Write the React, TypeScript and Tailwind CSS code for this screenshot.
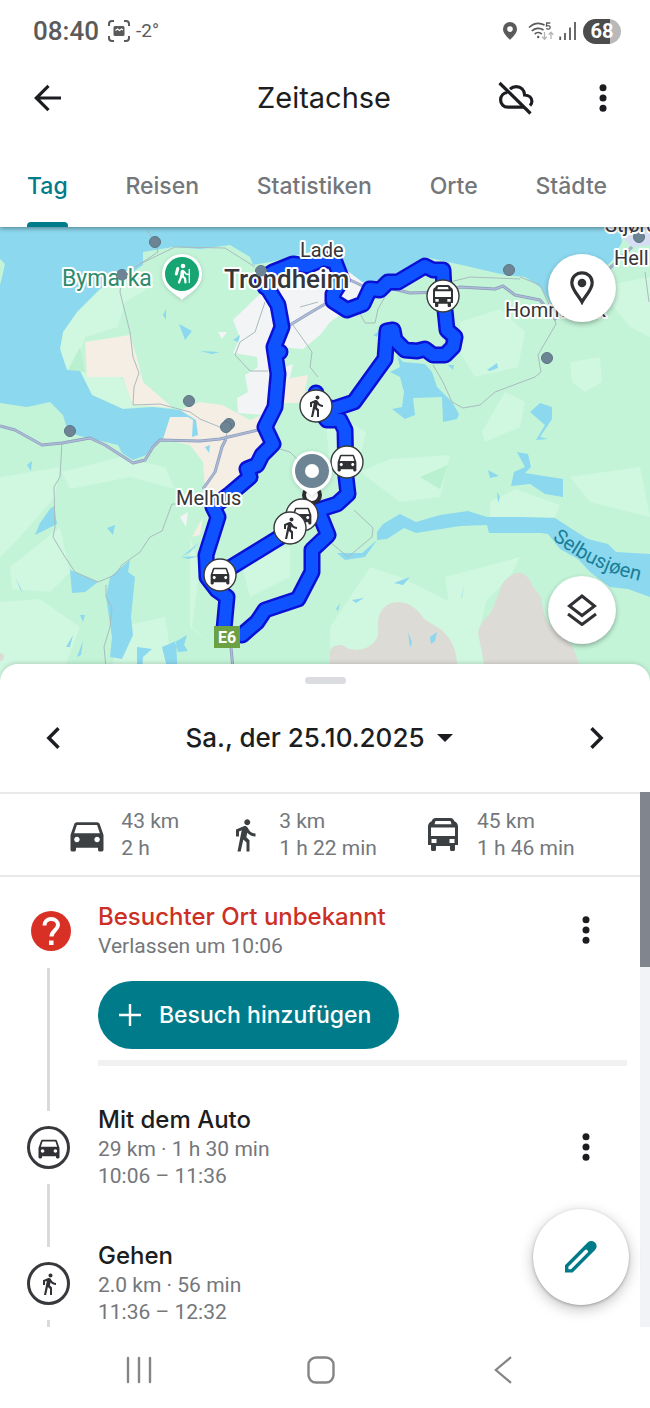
import React from "react";
import { MdDirectionsCar, MdDirectionsWalk } from "react-icons/md";

type IconProps = { className?: string };

const BusIcon = ({ className }: IconProps) => (
  <svg viewBox="0 0 30 33" className={className} fill="currentColor" aria-hidden="true">
    <path
      fillRule="evenodd"
      d="M8 0h14c3 0 3.600 1.500 4.400 3.200C28.500 4 30 6 30 8.500V27h-3v4.500a1.500 1.500 0 0 1-1.500 1.500h-2a1.500 1.500 0 0 1-1.500-1.500V28H8v3.500A1.500 1.500 0 0 1 6.500 33h-2A1.500 1.500 0 0 1 3 31.500V27H0V8.500C0 6 1.500 4 3.600 3.200 4.400 1.500 5 0 8 0Zm-.5 3-1 3.200h17l-1-3.200ZM3 9.500v8.500h24V9.500ZM3.500 21v4h5v-4Zm18 0v4h5v-4Z"
    />
  </svg>
);

const CloudOffIcon = () => (
  <svg viewBox="0 0 36 34" className="h-[34px] w-9" fill="none" stroke="currentColor" strokeWidth="3.2" aria-hidden="true">
    <path d="M1.500 2 32.500 32.500" />
    <path d="M9.500 11.500C5.500 11.800 2.600 15 2.600 19c0 4 3 7.200 7.200 7.200H26" />
    <path d="M12 8.200C13.800 6.500 16 5.700 18.300 5.700c4.600 0 8 3.300 8.300 8.300 4.500.2 7.300 2.700 7.300 6.300 0 1.800-.7 3.200-1.900 4.300" />
  </svg>
);

const MoreIcon = () => (
  <svg viewBox="0 0 24 28" className="h-7 w-6" fill="currentColor" aria-hidden="true">
    <circle cx="12" cy="3.700" r="3.500" />
    <circle cx="12" cy="14" r="3.500" />
    <circle cx="12" cy="24.300" r="3.500" />
  </svg>
);

const StatusBar = () => (
  <div className="flex h-[62px] items-center justify-between pl-[33px] pr-[29px] text-[#5a5a5a]">
    <div className="flex items-center">
      <span className="text-[26px] font-medium leading-8">08:40</span>
      <svg viewBox="0 0 22 22" className="ml-[9px] size-[22px]" fill="none" stroke="currentColor" strokeWidth="2" aria-hidden="true">
        <path d="M1 6V4a3 3 0 0 1 3-3h2M16 1h2a3 3 0 0 1 3 3v2M21 16v2a3 3 0 0 1-3 3h-2M6 21H4a3 3 0 0 1-3-3v-2" />
        <rect x="5.500" y="6" width="11" height="10" rx="1.500" fill="currentColor" stroke="none" />
        <path d="m7.500 10.500 2-1.500 2 1.500 2-1.500 1.500 1" stroke="#fff" strokeWidth="1.200" />
      </svg>
      <span className="ml-[6px] text-[19px] leading-8">-2°</span>
    </div>
    <div className="flex items-center">
      <svg viewBox="0 0 14 18" className="h-[18px] w-[14px]" aria-hidden="true">
        <path fill="currentColor" fillRule="evenodd" d="M7 0a7 7 0 0 1 7 7c0 4.500-4.500 8-7 11-2.500-3-7-6.500-7-11a7 7 0 0 1 7-7Zm0 4.300a2.800 2.800 0 1 0 0 5.600 2.800 2.800 0 0 0 0-5.600Z" />
      </svg>
      <svg viewBox="0 0 26 20" className="ml-[11px] h-5 w-[26px]" fill="none" stroke="currentColor" strokeWidth="1.700" aria-hidden="true">
        <path d="M1 6.500C5.500 2.300 11.500 1.500 16.500 4M3.800 10C7 7 12 6.500 15.500 9M6.700 13c2-1.800 5-1.800 7 0" />
        <circle cx="10.200" cy="16" r="1.200" fill="currentColor" stroke="none" />
        <path d="M22.300 2H18.700l-.3 3c3-.8 4 .3 3.700 1.800-.3 1.500-2.600 1.700-3.900.7" strokeWidth="1.300" />
        <path d="M16.500 11v7m-2.300-2.300 2.300 2.500 2.300-2.500M23 18v-6.500m-2.300 2.300L23 11.300l2.300 2.500" stroke="#b5b5b5" strokeWidth="1.300" />
      </svg>
      <svg viewBox="0 0 18 18" className="ml-[5px] size-[18px]" stroke="currentColor" strokeWidth="1.800" aria-hidden="true">
        <path d="M1.200 14.500V18M6 11v7M11 5.500V18M16 0v18" />
      </svg>
      <span className="ml-[6px] flex h-[25px] w-[38px] items-center justify-center rounded-full bg-linear-to-r from-[#4c4c4c] from-70% to-[#b9b9b9] to-70% text-[20px] font-bold text-white">
        68
      </span>
    </div>
  </div>
);

const TABS = ["Tag", "Reisen", "Statistiken", "Orte", "Städte"];

const Header = () => (
  <header className="relative z-10 bg-white shadow-[0_1px_5px_rgba(0,0,0,0.45)]">
    <StatusBar />
    <div className="grid h-[72px] grid-cols-[1fr_auto_1fr] items-center pl-[33px] pr-[35px]">
      <button type="button" aria-label="Zurück" className="justify-self-start">
        <svg viewBox="0 0 28 28" className="size-7" fill="none" stroke="currentColor" strokeWidth="3.200" aria-hidden="true">
          <path d="M28 14H4M15.500 1.800 3.300 14l12.200 12.200" />
        </svg>
      </button>
      <h1 className="font-[Inter,sans-serif] text-[29px] leading-9">Zeitachse</h1>
      <div className="flex items-center gap-[57px] justify-self-end">
        <button type="button" aria-label="Sicherung aus"><CloudOffIcon /></button>
        <button type="button" aria-label="Weitere Optionen"><MoreIcon /></button>
      </div>
    </div>
    <nav className="flex h-[93px] justify-between pl-[27px] pr-[43px] font-[Inter,sans-serif] text-[23px] font-medium text-[#73777b]">
      {TABS.map((tab, i) => (
        <a
          key={tab}
          href="#"
          className={
            i === 0
              ? "flex flex-col justify-between pt-9 leading-8 text-[#007b8a]"
              : "pt-9 leading-8"
          }
        >
          {tab}
          {i === 0 && <span className="h-[5px] rounded-t-[4px] bg-[#007b8a]" />}
        </a>
      ))}
    </nav>
  </header>
);

const ROUTES = [
  "M265 60 262 52 273 45 293 37 307 39 323 32 335 35 342 53 333 67 333 74 347 83 363 77 370 62 380 63 388 55 398 55 425 39 433 43 443 43 445 83 447 103 455 110 453 120 445 128 433 128 425 122 417 124 405 123 395 113 393 103 387 104 385 132 354 175 333 182 316 176",
  "M262 52 278 78 282 100 274 120 278 147 275 180 265 200 273 217 262 228 257 238 247 242 250 250 230 267 213 280 218 290 206 328 207 350 217 363 227 370 224 402",
  "M280 125 276 125M316 166 317 180 327 193 340 193 345 203 346 250 348 267 337 277 318 283 328 308 312 323 312 345 298 372 265 383 257 395 242 408",
  "M220 347 290 304 318 284",
];

const ROADS =
  "M0 199 15 203 42 218 62 216 90 211 105 218 133 236 145 233 153 220 160 213 200 214 220 212 258 203M226 212 222 220 215 245 203 262M230 410 234 453M290 98 308 87 325 77M350 53 365 60 385 60 410 66 440 65 460 60 495 62 503 59 515 68 540 73 555 92 590 60 632 20";

const DOTS = [
  [155, 15], [122, 48], [261, 44], [189, 174], [229, 197], [226, 200],
  [70, 204], [509, 43], [547, 131], [639, 10],
];

const LABEL = "fill-[#34363a] stroke-white [paint-order:stroke] [stroke-linejoin:round] [stroke-width:4px]";

type Mode = "car" | "walk" | "bus";

const MapMarker = ({ x, y, mode }: { x: number; y: number; mode: Mode }) => (
  <g transform={`translate(${x} ${y})`} color="#303134">
    <circle r="16" fill="#fff" stroke="#37393c" strokeWidth="1.400" />
    {mode === "car" && <MdDirectionsCar x={-12.5} y={-12.5} size={25} />}
    {mode === "walk" && <MdDirectionsWalk x={-12} y={-12} size={24} />}
    {mode === "bus" && (
      <svg x="-10" y="-11" width="20" height="22" viewBox="0 0 30 33">
        <BusIcon />
      </svg>
    )}
  </g>
);

const TimelineMap = () => (
  <svg viewBox="0 0 650 453" className="block h-auto w-full" role="img" aria-label="Karte">
    <rect width="650" height="453" fill="#c3f4d8" />
    {/* lighter woodland */}
    <g fill="#d0f7e0">
      <path d="M133 45 100 62 77 85 63 105 60 122 67 143 78 135 85 110 118 100 125 75 150 60Z" />
      <path d="M80 144 92 168 123 182 150 178 132 160 120 150 95 148ZM0 250 60 240 55 270 20 310 0 330ZM62 245 120 230 165 240 175 262 130 250 70 262Z" />
      <path d="M10 340 60 300 70 345 50 365 12 362ZM0 375 40 372 80 400 60 453 0 453ZM190 310 200 340 192 400 215 420 190 400Z" />
      <path d="M360 245 390 232 450 228 440 270 400 275ZM490 275 515 262 560 278 555 290 490 290ZM570 250 640 240 650 290 590 275Z" />
      <path d="M482 205 505 165 525 175 520 200 485 215ZM460 95 500 82 525 105 518 140 475 150 460 125ZM570 135 600 130 602 155 585 165 572 155ZM326 195 350 195 366 205 360 230 330 240Z" />
      <path d="M330 400 370 340 400 350 460 380 490 360 480 400 500 453 330 453ZM120 400 165 390 175 453 110 453ZM445 350 520 330 510 350 475 385 450 385Z" />
      <path d="M240 330 290 320 290 350 250 370ZM598 60 650 50 650 110 630 100Z" />
    </g>
    <path d="M420 250 448 238 440 262ZM80 120 85 145 68 143Z" fill="#b9f0d0" />
    {/* highland */}
    <g fill="#dddbd5">
      <path d="M330 453V424Q332 417 342 418Q353 426 366 421Q380 414 378 402Q377 385 386 379Q395 372 408 377Q418 382 424 392L440 402Q456 414 457 437V453Z" />
      <path d="M487 453Q482 425 478 406Q480 395 490 387Q498 370 502 357Q512 344 522 346Q530 350 533 360L541 370Q543 390 550 398L572 418 585 453Z" />
      <circle cx="0" cy="430" r="4" />
    </g>
    {/* lowland and built-up areas */}
    <g fill="#f5eee4">
      <path d="M85 115 130 108 137 131 143 155 173 181 133 178 123 150 87 150Z" />
      <path d="M200 175 222 178 250 193 262 188 262 210 272 222 247 252 220 270 205 262 203 235 190 218 163 212 170 190 188 190 180 183ZM203 290 200 308 192 310ZM285 152 308 148 303 176 280 176Z" />
    </g>
    <path d="M256 45 262 65 233 93 240 111 233 126 257 130 258 140 245 148 248 165 237 171 238 186 262 188 290 150 293 137 283 141 280 120 303 122 320 108 330 95 345 85 375 61 345 41 300 30Z" fill="#f2f4f5" />
    <path d="M218 105 227 105 222 112ZM180 290 188 285 186 300Z" fill="#f2f4f5" />
    {/* fjord */}
    <g fill="#8cd8ee">
      <path d="M0 0H620L622 15 612 34 555 85 547 70 540 60 525 50 505 48 462 38 448 35 425 30 408 42 382 52 365 57 345 42 335 28 318 22 300 28 270 35 253 38 250 30 230 18 200 22 173 20 143 25 143 38 133 45 100 62 77 85 63 105 60 122 67 143 80 144 92 168 123 182 153 180 180 183 196 193 198 208 192 210 193 193 188 190 170 190 163 212 153 218 146 228 133 233 122 226 118 218 80 209 68 205 63 188 50 175 27 180 0 176Z" />
      <path d="M377 305 383 297 400 287 416 295 440 288 468 284 487 290 520 290 555 291 572 302 588 312 608 317 616 325 650 327V370L628 362 610 360 590 345 578 332 560 322 548 307 540 306 489 306 487 298 460 299 416 306 404 301 387 312 377 313 365 330 345 333 337 326 362 326 377 313Z" />
      <path d="M397 128 403 135 425 137 432 145 437 160 452 175 459 187 457 192 443 195 442 170 413 171 415 188 405 192 392 182 402 180 404 165 400 150 390 145 400 140Z" />
      <path d="M448 138 454 138 453 143ZM487 143 497 136 498 141 490 144ZM530 185 540 176 552 180 552 192 540 210 548 212 536 213 545 198ZM517 225 528 227 531 240 525 246 563 252 563 270 545 267 530 257 511 259 514 245 525 240ZM488 243 499 249 490 251ZM497 265 500 270 498 276Z" />
      <path d="M50 282 54 279 57 297 35 308 40 296ZM107 301 115 298 113 308ZM27 238 32 234 31 244ZM70 343 98 355 85 365 72 366ZM110 350 130 333 128 345 135 350 131 390 133 408 122 432 110 430 112 410 106 370ZM80 388 85 388 83 395ZM66 420 73 408 70 420ZM77 430 83 414 81 428ZM162 420 170 453H178L176 414ZM137 420 152 422 143 430 142 445 137 445ZM175 415 187 408 184 418 188 424 178 425ZM394 356 410 350 403 358ZM352 373 364 371 356 376ZM336 382 340 376 338 384ZM461 372 464 358 462 370ZM408 405 412 415 410 421ZM430 410 437 405 435 414 431 417ZM179 97 192 104 185 113ZM163 88 166 82 166 93ZM233 113 240 108 238 115ZM200 124 220 125 212 127Z" />
      <path d="M181 330 200 315 190 325ZM181 330 200 329 188 332ZM373 108 380 104 377 110ZM205 220 210 218 209 226ZM15 350 23 366 20 362Z" />
    </g>
    <path d="M0 32 5 37 2 50 0 58Z" fill="#c3f4d8" />
    <path d="M620 0 650 0 650 18 632 20 624 12Z" fill="#d5def2" />
    {/* minor roads */}
    <g fill="none" stroke="#a9bcbd" strokeWidth="1" strokeLinejoin="round">
      <path d="M147 3 155 15 158 25 140 37 122 48 120 65 130 105 133 130 139 146 134 160 133 178 160 177 190 185 200 192 227 203 226 212" />
      <path d="M140 37 175 20 225 21 255 40M62 215 60 250 54 260 55 300 53 310 65 330 75 345 98 355 115 348 122 338 140 325 150 310 162 304 172 277 180 277M106 358 106 370 112 380 110 400 104 420 106 440" />
      <path d="M240 115 235 128 250 144 268 144M265 75 255 105 240 115M293 98 312 125 310 140 318 150M300 80 318 75M360 86 365 96 375 96 378 82 385 70M430 60 470 50 520 52M520 50 540 58 548 75 556 97 538 128 541 145 535 150 495 165 480 178 463 181 452 175 443 155 433 138" />
      <path d="M354 283 373 301 372 310 348 330 330 315M280 222 290 225 300 235M645 45 649 75" />
    </g>
    {/* main roads */}
    <g fill="none" strokeLinejoin="round">
      <path d={ROADS} stroke="#8d9dbd" strokeWidth="3" />
      <path d={ROADS} stroke="#adbbd6" strokeWidth="1.500" />
    </g>
    {/* travelled route */}
    <g fill="none" strokeLinejoin="round" strokeLinecap="round">
      {ROUTES.map((d) => <path key={d} d={d} stroke="#0a10d4" strokeWidth="17" />)}
      {ROUTES.map((d) => <path key={d} d={d} stroke="#0f52ff" strokeWidth="12" />)}
    </g>
    <g fill="#6c8494" stroke="#5d7383" strokeWidth="1">
      {DOTS.map(([x, y]) => <circle key={`${x}-${y}`} cx={x} cy={y} r="5.500" />)}
    </g>
    {/* place names */}
    <g className={LABEL} fontSize="20">
      <text x="300" y="30">Lade</text>
      <text x="224" y="61" fontSize="26" fontWeight="500">Trondheim</text>
      <text x="176" y="278">Melhus</text>
      <text x="614" y="38">Hell</text>
      <text x="505" y="90">Hommelvik</text>
      <text x="605" y="5">Stjørdal</text>
    </g>
    <text x="62" y="59" fontSize="23" className="fill-[#2e8b6c] stroke-white [paint-order:stroke] [stroke-linejoin:round] [stroke-width:4px]">Bymarka</text>
    <circle cx="122" cy="48" r="5.500" fill="#6c8494" />
    <circle cx="261" cy="44" r="5.500" fill="#6c8494" />
    <defs>
      <path id="selbu-line" d="M552 312 C576 330 600 346 650 356" />
    </defs>
    <text fontSize="20" fill="#197f98">
      <textPath href="#selbu-line">Selbusjøen</textPath>
    </text>
    <path d="M182 73c-4-5-20-11-20-26a20 20 0 0 1 40 0c0 15-16 21-20 26Z" fill="#fff" className="drop-shadow-sm" />
    <circle cx="182" cy="47" r="17" fill="#17a673" />
    <g stroke="#fff" strokeLinecap="round" strokeLinejoin="round" fill="none">
      <circle cx="183" cy="39" r="2.300" fill="#fff" stroke="none" />
      <path d="M182.500 44.500 182 49" strokeWidth="3.600" />
      <path d="M181.500 49 179 55.500M182.500 49 185 51.500 185.500 55.500" strokeWidth="2.200" />
      <path d="M184 44.500 186 47 189 47.500" strokeWidth="1.700" />
      <path d="M189.300 42.500v13" strokeWidth="1.300" />
      <path d="M177.800 41.500 176.300 47" strokeWidth="3" />
    </g>
    <rect x="214" y="399" width="26" height="22" fill="#6ba043" />
    <text x="227" y="416" fontSize="16" fontWeight="700" textAnchor="middle" fill="#fff">E6</text>
    <circle cx="312" cy="268" r="8" fill="#fff" stroke="#2c2d30" strokeWidth="4" />
    <MapMarker x={316} y={179} mode="walk" />
    <MapMarker x={443} y={69} mode="bus" />
    <MapMarker x={347} y={235} mode="car" />
    <MapMarker x={302} y={288} mode="car" />
    <MapMarker x={290} y={301} mode="walk" />
    <MapMarker x={220} y={348} mode="car" />
    <path d="M312 269c-4-5-20-9-20-25a20 20 0 0 1 40 0c0 16-16 20-20 25Z" fill="#fff" className="drop-shadow-sm" />
    <circle cx="312" cy="244" r="17" fill="#6c8494" />
    <circle cx="312" cy="244" r="7" fill="#fff" />
  </svg>
);

const MAP_BUTTON =
  "flex size-[68px] items-center justify-center rounded-full bg-white text-[#303134] shadow-[0_2px_5px_rgba(0,0,0,0.3)]";

const MapSection = () => (
  <section className="relative">
    <TimelineMap />
    <div className="absolute inset-y-0 right-[34px] flex flex-col justify-between pb-[36px] pt-[27px]">
      <button type="button" aria-label="Standort" className={MAP_BUTTON}>
        <svg viewBox="0 0 24 34" className="h-[34px] w-6" aria-hidden="true">
          <path d="M12 1.800c5.800 0 10.200 4.400 10.200 10C22.200 19 15 25 12 31 9 25 1.800 19 1.800 11.800c0-5.600 4.400-10 10.200-10Z" fill="none" stroke="currentColor" strokeWidth="3.200" />
          <circle cx="12" cy="12" r="4.300" fill="currentColor" />
        </svg>
      </button>
      <button type="button" aria-label="Kartenebenen" className={MAP_BUTTON}>
        <svg viewBox="0 0 30 32" className="h-8 w-[30px]" fill="none" stroke="currentColor" strokeWidth="3" aria-hidden="true">
          <path d="M15 2 27.500 12 15 21.500 2.500 12ZM1 20 15 30.500 29 20" />
        </svg>
      </button>
    </div>
  </section>
);

const STATS: { mode: Mode; distance: string; time: string }[] = [
  { mode: "car", distance: "43 km", time: "2 h" },
  { mode: "walk", distance: "3 km", time: "1 h 22 min" },
  { mode: "bus", distance: "45 km", time: "1 h 46 min" },
];

const Stats = () => (
  <ul className="flex h-[83px] items-center justify-center gap-11 border-b-2 border-[#e8e9eb] text-[21px] leading-[27px] text-[#74777b]">
    {STATS.map((s) => (
      <li key={s.mode} className="flex items-center gap-3">
        <span className="flex w-11 justify-center text-[#3c4043]">
          {s.mode === "car" && <MdDirectionsCar size={44} />}
          {s.mode === "walk" && <MdDirectionsWalk size={36} />}
          {s.mode === "bus" && <BusIcon className="h-[33px] w-[30px]" />}
        </span>
        <span>
          {s.distance}
          <br />
          {s.time}
        </span>
      </li>
    ))}
  </ul>
);

const Line = ({ className }: { className: string }) => <span className={`w-[3px] bg-[#dadada] ${className}`} />;

const Ring = ({ children }: { children: React.ReactNode }) => (
  <span className="my-[15px] flex size-[43px] shrink-0 items-center justify-center rounded-full border-3 border-[#37393c] text-[#303134]">
    {children}
  </span>
);

const RAIL = "flex w-[97px] shrink-0 flex-col items-center";

const UnknownVisit = () => (
  <li className="flex h-[218px]">
    <div className={`${RAIL} pt-[34px]`}>
      <svg viewBox="0 0 40 40" className="mb-[17px] ml-1 size-10 shrink-0" aria-hidden="true">
        <circle cx="20" cy="20" r="20" fill="#d93025" />
        <path d="M13.500 14.500c0-4 3-6.500 6.700-6.500 3.800 0 6.800 2.500 6.800 6 0 5-6.500 5.500-6.500 11.500" fill="none" stroke="#fff" strokeWidth="4" />
        <rect x="18" y="29.500" width="4.500" height="4.500" fill="#fff" />
      </svg>
      <Line className="flex-1" />
    </div>
    <div className="flex-1 pl-px pr-[13px] pt-[23px]">
      <div className="flex items-center justify-between pr-[29px]">
        <div>
          <h2 className="font-[Inter,sans-serif] text-2xl font-medium leading-[33px] text-[#cc2f26]">Besuchter Ort unbekannt</h2>
          <p className="text-[21px] leading-[27px] text-[#74777b]">Verlassen um 10:06</p>
        </div>
        <button type="button" aria-label="Optionen für unbekannten Ort"><MoreIcon /></button>
      </div>
      <button type="button" className="mt-[21px] flex h-[68px] items-center gap-[18px] rounded-full bg-[#007b8a] pl-[21px] pr-7 font-[Inter,sans-serif] text-[23px] font-medium text-white">
        <svg viewBox="0 0 22 22" className="size-[22px]" stroke="currentColor" strokeWidth="2.400" aria-hidden="true">
          <path d="M11 0v22M0 11h22" />
        </svg>
        Besuch hinzufügen
      </button>
      <div className="mt-[11px] h-[6px] bg-[#f1f1f1]" />
    </div>
  </li>
);

type TripProps = { title: string; detail: string; time: string; icon: React.ReactNode; menu?: boolean; last?: boolean };

const Trip = ({ title, detail, time, icon, menu, last }: TripProps) => (
  <li className={last ? "flex h-24 overflow-hidden" : "flex h-[136px]"}>
    <div className={RAIL}>
      <Line className="h-4 shrink-0" />
      <Ring>{icon}</Ring>
      <Line className="flex-1" />
    </div>
    <div className="flex flex-1 items-start justify-between pl-px pr-[42px] pt-2">
      <div>
        <h2 className="font-[Inter,sans-serif] text-2xl font-medium leading-[33px]">{title}</h2>
        <p className="text-[21px] leading-[27px] text-[#74777b]">
          {detail}
          <br />
          {time}
        </p>
      </div>
      {menu && (
        <button type="button" aria-label={`Optionen für ${title}`} className="mt-[30px]">
          <MoreIcon />
        </button>
      )}
    </div>
  </li>
);

const Chevron = ({ d }: { d: string }) => (
  <svg viewBox="0 0 14 22" className="h-[22px] w-[14px]" fill="none" stroke="currentColor" strokeWidth="3.400" aria-hidden="true">
    <path d={d} />
  </svg>
);

const Sheet = () => (
  <main className="relative z-10 -mt-4 rounded-t-[18px] bg-white shadow-[0_-1px_4px_rgba(0,0,0,0.15)]">
    <div className="flex justify-center pt-[13px]">
      <span className="h-[7px] w-[41px] rounded-full bg-[#dadce0]" />
    </div>
    <div className="flex h-[108px] items-center justify-between px-[46px]">
      <button type="button" aria-label="Vorheriger Tag"><Chevron d="M12.500 1.200 2.800 11l9.700 9.800" /></button>
      <button type="button" className="flex items-center gap-3 pr-3 font-[Inter,sans-serif] text-[26px] font-medium leading-8">
        Sa., der 25.10.2025
        <svg viewBox="0 0 16 8" className="h-2 w-4" fill="currentColor" aria-hidden="true">
          <path d="M0 0h16L8 8Z" />
        </svg>
      </button>
      <button type="button" aria-label="Nächster Tag"><Chevron d="M1.500 1.200 11.200 11 1.500 20.800" /></button>
    </div>
    <div className="flex border-t-2 border-[#e8e9eb]">
      <div className="min-w-0 flex-1">
        <Stats />
        <ul>
          <UnknownVisit />
          <Trip title="Mit dem Auto" detail="29 km · 1 h 30 min" time="10:06 – 11:36" icon={<MdDirectionsCar size={28} />} menu />
          <Trip title="Gehen" detail="2.0 km · 56 min" time="11:36 – 12:32" icon={<MdDirectionsWalk size={24} />} last />
        </ul>
      </div>
      <div className="-mt-[2px] w-[10px] bg-[#f1f3f6]">
        <div className="h-[175px] bg-[#80858e]" />
      </div>
    </div>
    <button
      type="button"
      aria-label="Bearbeiten"
      className="absolute bottom-[22px] right-[21px] flex size-24 items-center justify-center rounded-full bg-white text-[#007b8a] shadow-[0_4px_14px_rgba(0,0,0,0.25),0_1px_3px_rgba(0,0,0,0.25)]"
    >
      <svg viewBox="0 0 32 32" className="size-8" fill="currentColor" aria-hidden="true">
        <path fillRule="evenodd" d="M0 24.200 22.600 1.600a5 5 0 0 1 7.400 0 5 5 0 0 1 0 7.400L7.600 31.500H0ZM3.400 25.800v2.400H6L22.400 11.800a1.800 1.800 0 0 0-2.600-2.600Z" />
      </svg>
    </button>
  </main>
);

const SystemNav = () => (
  <footer className="relative z-20 grid h-[81px] grid-cols-3 place-items-center bg-white pl-12 pr-14 pt-1 text-[#858585]">
    <button type="button" aria-label="Letzte Apps">
      <svg viewBox="0 0 26 28" className="h-7 w-[26px]" stroke="currentColor" strokeWidth="2.400" strokeLinecap="round" aria-hidden="true">
        <path d="M2 2v24M13 2v24M24 2v24" />
      </svg>
    </button>
    <button type="button" aria-label="Startbildschirm">
      <svg viewBox="0 0 28 28" className="size-7" fill="none" stroke="currentColor" strokeWidth="2.400" aria-hidden="true">
        <rect x="1.500" y="1.500" width="25" height="25" rx="7.500" />
      </svg>
    </button>
    <button type="button" aria-label="System zurück">
      <svg viewBox="0 0 18 28" className="h-7 w-[18px]" fill="none" stroke="currentColor" strokeWidth="2.200" aria-hidden="true">
        <path d="M17 1.200 1.800 14 17 26.800" />
      </svg>
    </button>
  </footer>
);

export default function App() {
  return (
    <div className="min-h-screen overflow-x-hidden bg-white font-[Roboto,sans-serif] text-[#1c1d20]">
      <Header />
      <MapSection />
      <Sheet />
      <SystemNav />
    </div>
  );
}
